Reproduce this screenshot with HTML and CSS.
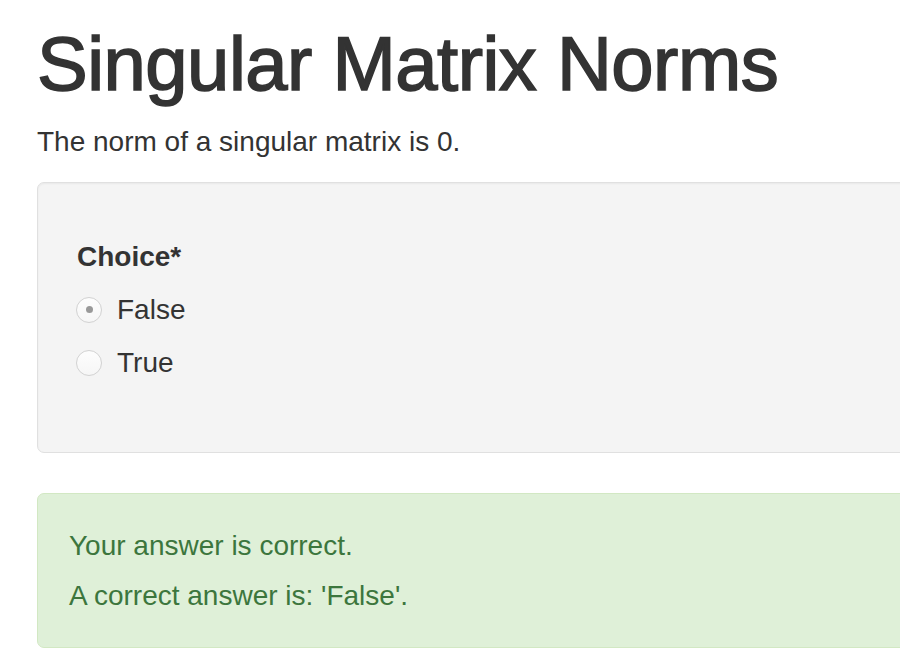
FILE: index.html
```html
<!DOCTYPE html>
<html lang="en">
<head>
<meta charset="utf-8">
<title>Singular Matrix Norms</title>
<link rel="stylesheet" href="styles.css">
</head>
<body>
<main class="page">
  <h1 class="title">Singular Matrix Norms</h1>
  <p class="lead">The norm of a singular matrix is 0.</p>
  <section class="well">
    <div class="field-label">Choice*</div>
    <label class="choice"><span class="radio checked"></span><span>False</span></label>
    <label class="choice"><span class="radio"></span><span>True</span></label>
  </section>
  <section class="alert">
    <p class="alert-line">Your answer is correct.</p>
    <p class="alert-line">A correct answer is: 'False'.</p>
  </section>
</main>
</body>
</html>
```

FILE: styles.css
```css
html { overflow: hidden; }
body {
  margin: 0;
  background: #fff;
  font-family: "Liberation Sans", Arial, Helvetica, sans-serif;
  color: #333;
}
.page {
  width: 1000px;
  padding: 0 0 0 37px;
}
.title {
  margin: 0;
  padding-top: 20px;
  font-size: 76px;
  font-weight: 500;
  line-height: 88px;
  letter-spacing: -0.5px;
  -webkit-text-stroke: 1.6px #333;
}
.lead {
  margin: 16px 0 0;
  font-size: 28px;
  line-height: 36px;
}
.well {
  margin-top: 22px;
  height: 269px;
  box-sizing: content-box;
  padding: 0 0 0 39px;
  background: #f4f4f4;
  border: 1px solid #e0e0e0;
  border-radius: 7px;
  box-shadow: inset 0 1px 2px rgba(0,0,0,0.05);
}
.field-label {
  margin-top: 56px;
  font-size: 28px;
  font-weight: bold;
  line-height: 36px;
  margin-bottom: 8px;
}
.choice {
  display: flex;
  align-items: center;
  gap: 15px;
  height: 53px;
  margin-left: -1px;
  font-size: 28px;
}
.choice span:last-child { line-height: 36px; }
.radio {
  width: 24px;
  height: 24px;
  border: 1px solid #d2d2d2;
  border-radius: 50%;
  background: linear-gradient(#fdfdfd, #f6f6f6);
  display: flex;
  align-items: center;
  justify-content: center;
  box-sizing: content-box;
}
.radio.checked::after {
  content: "";
  width: 7px;
  height: 7px;
  border-radius: 50%;
  background: #999;
}
.alert {
  margin-top: 40px;
  padding: 34px 0 19px 31px;
  background: #dff0d8;
  border: 1px solid #d2e8c3;
  border-radius: 7px;
  color: #3c763d;
}
.alert-line {
  margin: 0 0 14px;
  font-size: 28px;
  line-height: 36px;
}
```
